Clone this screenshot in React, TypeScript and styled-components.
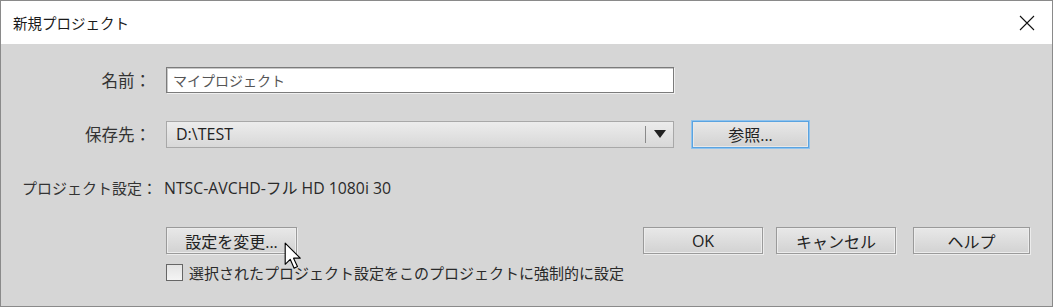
import styled, { createGlobalStyle } from "styled-components";

const GlobalStyle = createGlobalStyle`
  html, body {
    margin: 0;
    padding: 0;
    background: #d6d6d6;
  }
  body {
    font-family: "Noto Sans CJK JP", "Noto Sans", sans-serif;
  }
`;

const Window = styled.div`
  width: 1053px;
  height: 307px;
  box-sizing: border-box;
  border: 1px solid #8a8a8a;
  background: #d6d6d6;
  display: flex;
  flex-direction: column;
  overflow: hidden;
`;

const TitleBar = styled.div`
  height: 43px;
  background: #ffffff;
  display: flex;
  align-items: center;
  justify-content: space-between;
  padding: 0 17px 0 12px;
  font-size: 14.5px;
  color: #1a1a1a;
`;

const CloseIcon = styled.svg`
  width: 16px;
  height: 16px;
  margin-top: 1px;
`;

const Body = styled.div`
  flex: 1;
  display: flex;
  flex-direction: column;
  padding-top: 22px;
  color: #2c2c2c;
  font-size: 14px;
`;

const Row = styled.div<{ $h: number; $gap?: number }>`
  display: flex;
  align-items: center;
  height: ${(p) => p.$h}px;
  margin-bottom: ${(p) => p.$gap ?? 0}px;
`;

const Label = styled.div`
  width: 152px;
  text-align: right;
  padding-right: 2px;
  box-sizing: border-box;
  white-space: nowrap;
  font-size: 16.5px;
  color: #333;
`;

const LeftLabel = styled.div`
  width: 163px;
  padding-left: 21px;
  box-sizing: border-box;
  white-space: nowrap;
  font-size: 15px;
  color: #333;
`;

const TextInput = styled.div`
  width: 508px;
  height: 26px;
  box-sizing: border-box;
  background: #fff;
  border: 1px solid #7b7b7b;
  box-shadow: inset 1px 1px 0 #c8c8c8, 1px 1px 0 #f0f0f0;
  display: flex;
  align-items: center;
  padding-left: 6px;
  font-size: 14px;
  color: #555;
`;

const Select = styled.div`
  width: 508px;
  height: 27px;
  box-sizing: border-box;
  border: 1px solid #a8a8a8;
  background: linear-gradient(#ececec, #d8d8d8);
  display: flex;
  align-items: center;
  padding-left: 9px;
  font-family: "Open Sans", "Noto Sans", sans-serif;
  font-size: 16px;
  color: #222;
`;

const SelectText = styled.div`
  flex: 1;
`;

const SelectSep = styled.div`
  width: 1px;
  height: 17px;
  background: #8a8a8a;
`;

const Arrow = styled.div`
  width: 27px;
  display: flex;
  justify-content: center;
  &::after {
    content: "";
    border-left: 6px solid transparent;
    border-right: 6px solid transparent;
    border-top: 8px solid #222;
  }
`;

const Button = styled.button<{ $w: number; $focus?: boolean; $ml?: number }>`
  width: ${(p) => p.$w}px;
  height: 27px;
  margin-left: ${(p) => p.$ml ?? 0}px;
  box-sizing: border-box;
  border: 1px solid ${(p) => (p.$focus ? "#5aa3e0" : "#9a9a9a")};
  box-shadow: ${(p) =>
    p.$focus
      ? "0 0 0 1px #8fc3ee, inset 0 0 0 1px #e8e8e8"
      : "inset 0 0 0 1px #ececec, 1px 1px 0 #ececec"};
  background: linear-gradient(#e8e8e8, #d2d2d2);
  font-family: "Open Sans", "Noto Sans CJK JP", sans-serif;
  font-size: 16px;
  color: #222;
  padding: 0;
  display: flex;
  align-items: center;
  justify-content: center;
  cursor: default;
`;

const Value = styled.div`
  font-family: "Open Sans", "Noto Sans CJK JP", sans-serif;
  font-size: 15.8px;
  color: #2a2a2a;
`;

const Spacer = styled.div<{ $w: number }>`
  width: ${(p) => p.$w}px;
  flex-shrink: 0;
`;

const ButtonGroup = styled.div`
  display: flex;
  margin-left: auto;
  margin-right: 22px;
`;

const Check = styled.div`
  width: 17px;
  height: 17px;
  box-sizing: border-box;
  border: 1px solid #666;
  background: linear-gradient(#e4e4e4, #f4f4f4);
  margin-right: 6px;
`;

const CheckLabel = styled.div`
  font-size: 15px;
  color: #2a2a2a;
`;

const ChangeWrap = styled.div`
  position: relative;
`;

const Cursor = styled.svg`
  position: absolute;
  left: 118px;
  top: 15px;
  width: 18px;
  height: 29px;
`;

export default function App() {
  return (
    <>
      <GlobalStyle />
      <Window>
        <TitleBar>
          <span>新規プロジェクト</span>
          <CloseIcon viewBox="0 0 16 16">
            <path d="M1 1L15 15M15 1L1 15" stroke="#111" strokeWidth="1.1" fill="none" />
          </CloseIcon>
        </TitleBar>
        <Body>
          <Row $h={28} $gap={26}>
            <Label>名前：</Label>
            <Spacer $w={13} />
            <TextInput>マイプロジェクト</TextInput>
          </Row>
          <Row $h={28} $gap={27}>
            <Label>保存先：</Label>
            <Spacer $w={13} />
            <Select>
              <SelectText>D:\TEST</SelectText>
              <SelectSep />
              <Arrow />
            </Select>
            <Spacer $w={18} />
            <Button $w={117} $focus>
              参照...
            </Button>
          </Row>
          <Row $h={24} $gap={28}>
            <LeftLabel>プロジェクト設定：</LeftLabel>
            <Value>NTSC-AVCHD-フル HD 1080i 30</Value>
          </Row>
          <Row $h={27} $gap={8}>
            <Spacer $w={165} />
            <ChangeWrap>
              <Button $w={131}>設定を変更...</Button>
              <Cursor viewBox="0 0 16 26">
                <path
                  d="M1 1L1 20L5.5 15.5L9 23.5L12 22L8.5 14.5L14.5 14.5Z"
                  fill="#fff"
                  stroke="#000"
                  strokeWidth="1"
                  strokeLinejoin="round"
                />
              </Cursor>
            </ChangeWrap>
            <ButtonGroup>
              <Button $w={120}>OK</Button>
              <Button $w={120} $ml={13}>
                キャンセル
              </Button>
              <Button $w={117} $ml={17}>
                ヘルプ
              </Button>
            </ButtonGroup>
          </Row>
          <Row $h={20}>
            <Spacer $w={165} />
            <Check />
            <CheckLabel>選択されたプロジェクト設定をこのプロジェクトに強制的に設定</CheckLabel>
          </Row>
        </Body>
      </Window>
    </>
  );
}
